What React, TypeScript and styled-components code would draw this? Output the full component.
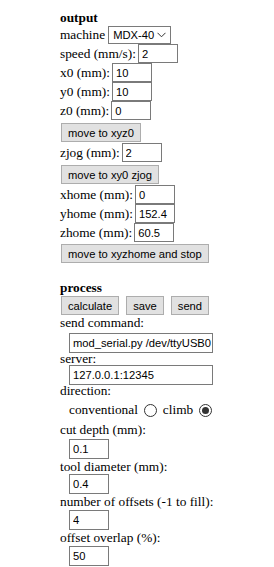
import React from 'react';
import styled, { createGlobalStyle } from 'styled-components';

const GlobalStyle = createGlobalStyle`
  html, body {
    margin: 0;
    padding: 0;
    background: #ffffff;
  }
  body {
    font-family: "Liberation Serif", "Times New Roman", serif;
    font-size: 13.333px;
    color: #000000;
  }
`;

const Panel = styled.div`
  padding: 10px 0 0 60px;
  width: 214px;
`;

const Section = styled.div<{ $gap?: number }>`
  display: flex;
  flex-direction: column;
  align-items: flex-start;
  margin-bottom: ${p => p.$gap ?? 0}px;
`;

const Title = styled.div`
  font-weight: bold;
  line-height: 16px;
`;

const Row = styled.div<{ $h?: number }>`
  display: flex;
  align-items: center;
  gap: 2px;
  height: ${p => p.$h ?? 19}px;
`;

const Label = styled.span<{ $lh?: number }>`
  white-space: nowrap;
  line-height: ${p => p.$lh ?? 16}px;
`;

const TextInput = styled.input<{ $w?: number; $h?: number }>`
  box-sizing: border-box;
  width: ${p => p.$w ?? 40}px;
  height: ${p => p.$h ?? 19}px;
  padding: 0 0 0 3px;
  border: 1px solid #7a7a7a;
  border-radius: 0;
  font-family: "Liberation Sans", Arial, sans-serif;
  font-size: 11.2px;
  color: #000;
  background: #fff;
  outline: none;
`;

const Select = styled.div`
  display: flex;
  align-items: center;
  justify-content: space-between;
  box-sizing: border-box;
  width: 63px;
  height: 18px;
  margin-left: 1px;
  padding: 0 4px 0 4px;
  border: 1px solid #7a7a7a;
  font-family: "Liberation Sans", Arial, sans-serif;
  font-size: 11.2px;
  white-space: nowrap;
`;

const Button = styled.button<{ $mt?: number; $mb?: number }>`
  box-sizing: border-box;
  height: 19px;
  margin: ${p => p.$mt ?? 3}px 0 ${p => p.$mb ?? 1}px 1px;
  padding: 0 6px;
  border: 1px solid #adadad;
  border-radius: 0;
  background: #e1e1e1;
  font-family: "Liberation Sans", Arial, sans-serif;
  font-size: 11.2px;
  color: #000;
  line-height: 16px;
  white-space: nowrap;
`;

const ButtonRow = styled.div`
  display: flex;
  gap: 6px;
`;

const Stacked = styled.div<{ $mt?: number }>`
  display: flex;
  flex-direction: column;
  align-items: flex-start;
  margin-top: ${p => p.$mt ?? 0}px;
`;

const Indented = styled.div<{ $mt?: number }>`
  margin: ${p => p.$mt ?? 0}px 0 0 9px;
  display: flex;
  align-items: center;
`;

const Radio = styled.span<{ $on?: boolean }>`
  box-sizing: border-box;
  display: inline-flex;
  align-items: center;
  justify-content: center;
  width: 13px;
  height: 13px;
  margin: 0 6px 0 6px;
  border: 1px solid #333;
  border-radius: 50%;
  &::after {
    content: '';
    display: ${p => (p.$on ? 'block' : 'none')};
    width: 7px;
    height: 7px;
    border-radius: 50%;
    background: #333;
  }
`;

const Chevron = () => (
  <svg width="9" height="6" viewBox="0 0 9 6" fill="none">
    <path d="M0.5 0.8 L4.5 4.8 L8.5 0.8" stroke="#333" strokeWidth="1" />
  </svg>
);

const Field: React.FC<{ label: string; value: string; w?: number }> = ({ label, value, w }) => (
  <Row>
    <Label>{label}</Label>
    <TextInput readOnly value={value} $w={w} />
  </Row>
);

const Block: React.FC<{ label: string; value: string; w?: number; lh?: number; mt?: number }> = ({
  label,
  value,
  w,
  lh,
  mt,
}) => (
  <Stacked>
    <Label $lh={lh}>{label}</Label>
    <Indented $mt={mt}>
      <TextInput readOnly value={value} $w={w} $h={20} />
    </Indented>
  </Stacked>
);

export default function App() {
  return (
    <>
      <GlobalStyle />
      <Panel>
        <Section $gap={17}>
          <Title>output</Title>
          <Row $h={18}>
            <Label>machine</Label>
            <Select>
              <span>MDX-40</span>
              <Chevron />
            </Select>
          </Row>
          <Field label="speed (mm/s):" value="2" />
          <Field label="x0 (mm):" value="10" />
          <Field label="y0 (mm):" value="10" />
          <Field label="z0 (mm):" value="0" />
          <Button>move to xyz0</Button>
          <Field label="zjog (mm):" value="2" />
          <Button>move to xy0 zjog</Button>
          <Field label="xhome (mm):" value="0" />
          <Field label="yhome (mm):" value="152.4" />
          <Field label="zhome (mm):" value="60.5" />
          <Button $mt={2} $mb={0}>move to xyzhome and stop</Button>
        </Section>
        <Section>
          <Title>process</Title>
          <ButtonRow>
            <Button $mt={0} $mb={0}>calculate</Button>
            <Button $mt={0} $mb={0}>save</Button>
            <Button $mt={0} $mb={0}>send</Button>
          </ButtonRow>
          <Block label="send command:" value="mod_serial.py /dev/ttyUSB0" w={144} mt={2} />
          <Block label="server:" value="127.0.0.1:12345" w={144} lh={12} />
          <Stacked>
            <Label $lh={12}>direction:</Label>
            <Indented $mt={5}>
              <Label>conventional</Label>
              <Radio />
              <Label>climb</Label>
              <Radio $on />
            </Indented>
          </Stacked>
          <Stacked $mt={4}>
            <Label>cut depth (mm):</Label>
            <Indented $mt={1}>
              <TextInput readOnly value="0.1" $h={20} />
            </Indented>
          </Stacked>
          <Block label="tool diameter (mm):" value="0.4" lh={15} />
          <Block label="number of offsets (-1 to fill):" value="4" lh={16} />
          <Block label="offset overlap (%):" value="50" lh={16} />
        </Section>
      </Panel>
    </>
  );
}
